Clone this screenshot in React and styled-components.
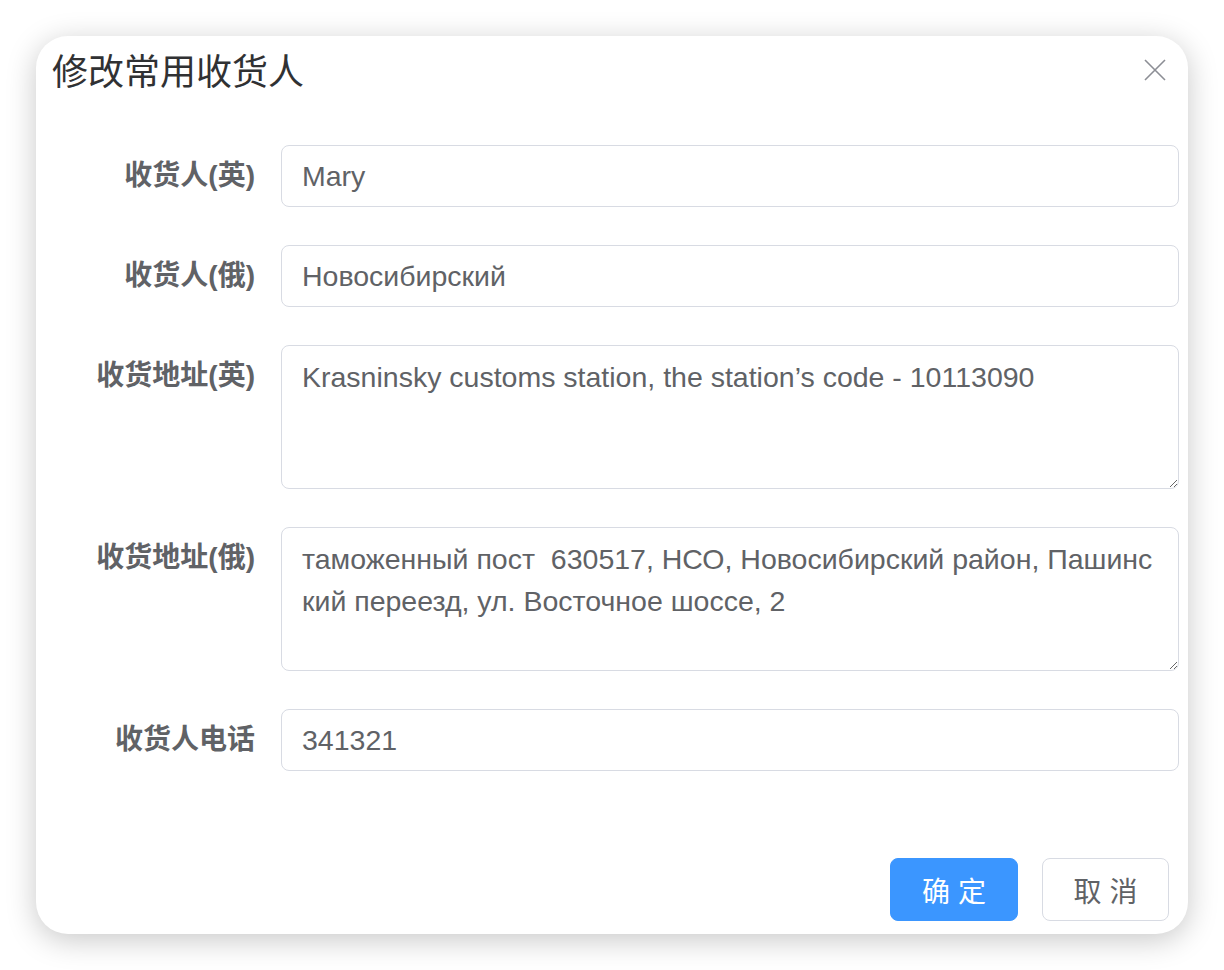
import React from "react";
import styled, { createGlobalStyle } from "styled-components";

const GlobalStyle = createGlobalStyle`
  html, body {
    margin: 0;
    padding: 0;
    background: #ffffff;
  }
  body {
    font-family: "Liberation Sans", "Noto Sans CJK SC", sans-serif;
  }
  * {
    box-sizing: border-box;
  }
`;

const Page = styled.div`
  width: 1224px;
  height: 970px;
  padding: 36px;
`;

const Dialog = styled.div`
  width: 1152px;
  background: #ffffff;
  border-radius: 32px;
  box-shadow: 0 6px 30px rgba(0, 0, 0, 0.22);
`;

const Header = styled.div`
  display: flex;
  align-items: center;
  justify-content: space-between;
  padding: 13px 20px 0 16px;
`;

const Title = styled.span`
  font-size: 36px;
  line-height: 48px;
  color: #303133;
`;

const CloseButton = styled.button`
  width: 26px;
  height: 26px;
  padding: 0;
  margin-top: -7px;
  border: none;
  background: transparent;
  display: flex;
  align-items: center;
  justify-content: center;
  cursor: pointer;
`;

const Body = styled.div`
  padding: 48px 9px 0 40px;
`;

const FormItem = styled.div`
  display: flex;
  align-items: flex-start;
  margin-bottom: 38px;
`;

const Label = styled.label`
  flex: 0 0 205px;
  padding-right: 26px;
  text-align: right;
  font-size: 28px;
  line-height: 62px;
  font-weight: bold;
  color: #606266;
`;

const Input = styled.input`
  flex: 1;
  height: 62px;
  padding: 0 20px;
  border: 1px solid #d8dbe3;
  border-radius: 8px;
  font-family: inherit;
  font-size: 28.5px;
  color: #606266;
  outline: none;
`;

const TextArea = styled.textarea`
  flex: 1;
  display: block;
  height: 144px;
  padding: 10px 20px;
  border: 1px solid #d8dbe3;
  border-radius: 8px;
  font-family: inherit;
  font-size: 28.5px;
  line-height: 42px;
  color: #606266;
  word-break: break-all;
  resize: vertical;
  outline: none;
`;

const Footer = styled.div`
  display: flex;
  justify-content: flex-end;
  gap: 24px;
  padding: 49px 19px 13px 0;
`;

const Button = styled.button`
  width: ${(p) => (p.$primary ? "128px" : "127px")};
  height: 63px;
  border-radius: 8px;
  font-family: inherit;
  font-size: 28px;
  cursor: pointer;
  border: 1px solid ${(p) => (p.$primary ? "#3b96ff" : "#d8dbe3")};
  background: ${(p) => (p.$primary ? "#3b96ff" : "#ffffff")};
  color: ${(p) => (p.$primary ? "#ffffff" : "#606266")};
`;

const fields = [
  { label: "收货人(英)", value: "Mary" },
  { label: "收货人(俄)", value: "Новосибирский" },
  {
    label: "收货地址(英)",
    value: "Krasninsky customs station, the station’s code - 10113090",
    multi: true,
  },
  {
    label: "收货地址(俄)",
    value:
      "таможенный пост  630517, НСО, Новосибирский район, Пашинский переезд, ул. Восточное шоссе, 2",
    multi: true,
  },
  { label: "收货人电话", value: "341321" },
];

export default function App() {
  return (
    <>
      <GlobalStyle />
      <Page>
        <Dialog>
          <Header>
            <Title>修改常用收货人</Title>
            <CloseButton aria-label="close">
              <svg width="22" height="22" viewBox="0 0 22 22">
                <path d="M1 1 L21 21 M21 1 L1 21" stroke="#8c8e95" strokeWidth="1.6" fill="none" />
              </svg>
            </CloseButton>
          </Header>
          <Body>
            {fields.map((f) => (
              <FormItem key={f.label}>
                <Label>{f.label}</Label>
                {f.multi ? (
                  <TextArea defaultValue={f.value} />
                ) : (
                  <Input defaultValue={f.value} />
                )}
              </FormItem>
            ))}
          </Body>
          <Footer>
            <Button $primary>确 定</Button>
            <Button>取 消</Button>
          </Footer>
        </Dialog>
      </Page>
    </>
  );
}
